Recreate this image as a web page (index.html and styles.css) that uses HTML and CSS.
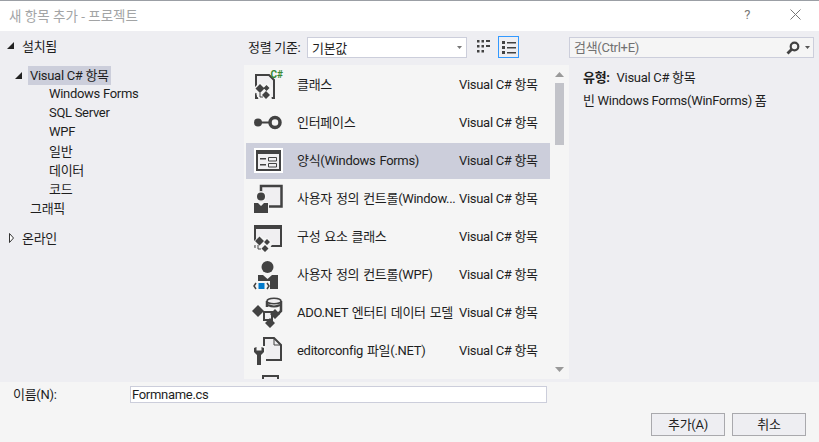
FILE: index.html
```html
<!DOCTYPE html>
<html lang="ko">
<head>
    <meta charset="utf-8">
    <title>새 항목 추가 - 프로젝트</title>
    <link rel="stylesheet" href="styles.css">
</head>
<body>
    <div class="title-bar">
        <span class="title-text">새 항목 추가 - 프로젝트</span>
        <span class="help-button">?</span>
        <svg class="close-button" width="11" height="11" viewBox="0 0 11 11"><path d="M0.5 0.5L10.5 10.5M10.5 0.5L0.5 10.5" stroke="#777" fill="none"/></svg>
    </div>

    <div class="main">
        <div class="tree">
            <div class="tree-row root">
                <svg class="twist" width="7" height="7" viewBox="0 0 7 7"><path d="M7 0V7H0Z" fill="#222"/></svg>
                <span>설치됨</span>
            </div>
            <div class="tree-row group">
                <svg class="twist" width="7" height="7" viewBox="0 0 7 7"><path d="M7 0V7H0Z" fill="#222"/></svg>
                <span class="tree-selected">Visual C# 항목</span>
            </div>
            <div class="tree-row leaf">Windows Forms</div>
            <div class="tree-row leaf">SQL Server</div>
            <div class="tree-row leaf">WPF</div>
            <div class="tree-row leaf">일반</div>
            <div class="tree-row leaf">데이터</div>
            <div class="tree-row leaf">코드</div>
            <div class="tree-row sibling">그래픽</div>
            <div class="tree-row root closed">
                <svg class="twist" width="5" height="10" viewBox="0 0 5 10"><path d="M0.5 0.5L4.5 5L0.5 9.5Z" fill="#fff" stroke="#333"/></svg>
                <span>온라인</span>
            </div>
        </div>

        <div class="center">
            <div class="toolbar">
                <span class="sort-label">정렬 기준:</span>
                <div class="sort-select">
                    <span>기본값</span>
                    <svg width="5" height="3" viewBox="0 0 5 3"><path d="M0 0H5L2.5 3Z" fill="#777"/></svg>
                </div>
                <svg class="grid-view" width="14" height="14" viewBox="0 0 14 14" fill="#424242">
                    <path d="M1 0h2.500v2.500H1zM5.500 0h2.500v2.500H5.500zM10 0h4v2h-4zM1 5h2.500v2.500H1zM5.500 5h2.500v2.500H5.500zM10 5h4v2h-4zM1 10h2.500v2.500H1zM5.500 10h2.500v2.500H5.500z"/>
                </svg>
                <div class="list-view">
                    <svg width="14" height="13" viewBox="0 0 14 13" fill="#424242">
                        <path d="M0 0h3v3H0zM5 1h9v1.500H5zM0 5h3v3H0zM5 6h9v1.500H5zM0 10h3v3H0zM5 11h9v1.500H5z"/>
                    </svg>
                </div>
            </div>

            <div class="list-wrap">
                <div class="item-list">
                    <div class="item">
                        <svg class="item-icon" width="32" height="32" viewBox="0 0 32 32">
                            <path d="M3 6H16L21 11V29H3Z" fill="#f0eff1" stroke="#424242" stroke-width="2"/>
                            <path d="M0 20L7 13L11 16L15 14L20 19L18 25L19 31H6L4 27Z" fill="#f5f5f5"/>
                            <path d="M7 15L11.500 19.500L7 24L2.500 19.500ZM13.500 16L16.500 19L13.500 22L10.500 19ZM13 22L17 26L13 30L9 26Z" fill="#424242"/>
                            <path d="M7 24V28H10M3 24V29H5" fill="none" stroke="#424242"/>
                            <text class="csharp" x="17.500" y="9">C#</text>
                        </svg>
                        <span class="item-name">클래스</span>
                        <span class="item-type">Visual C# 항목</span>
                    </div>
                    <div class="item">
                        <svg class="item-icon" width="32" height="32" viewBox="0 0 32 32">
                            <circle cx="5" cy="15.500" r="4" fill="#424242"/>
                            <path d="M8 15.500H16" stroke="#424242" stroke-width="2"/>
                            <circle cx="22" cy="15.500" r="5" fill="#f5f5f5" stroke="#424242" stroke-width="3.500"/>
                        </svg>
                        <span class="item-name">인터페이스</span>
                        <span class="item-type">Visual C# 항목</span>
                    </div>
                    <div class="item selected">
                        <svg class="item-icon" width="32" height="32" viewBox="0 0 32 32">
                            <rect x="1" y="3" width="29" height="25" fill="#fff"/>
                            <rect x="3" y="5" width="25" height="21" fill="#424242"/>
                            <rect x="5" y="9" width="21" height="15" fill="#f0eff1"/>
                            <path d="M7 13h6v1.500H7zM7 19h6v1.500H7z" fill="#424242"/>
                            <path d="M15.500 12.500h8v3.500h-8zM15.500 18.500h8v3.500h-8z" fill="none" stroke="#424242"/>
                        </svg>
                        <span class="item-name">양식(Windows Forms)</span>
                        <span class="item-type">Visual C# 항목</span>
                    </div>
                    <div class="item">
                        <svg class="item-icon" width="32" height="32" viewBox="0 0 32 32">
                            <rect x="8" y="3" width="20.500" height="20.500" fill="#f0eff1" stroke="#424242" stroke-width="2.500"/>
                            <circle cx="8" cy="13.500" r="5.500" fill="#f5f5f5"/>
                            <rect x="0" y="19" width="16" height="12" fill="#f5f5f5"/>
                            <circle cx="8" cy="13.500" r="4" fill="#424242"/>
                            <path d="M1 20H5L8 23L11 20H15V30H1Z" fill="#424242"/>
                        </svg>
                        <span class="item-name">사용자 정의 컨트롤(Window...</span>
                        <span class="item-type">Visual C# 항목</span>
                    </div>
                    <div class="item">
                        <svg class="item-icon" width="32" height="32" viewBox="0 0 32 32">
                            <rect x="2" y="5" width="26" height="20" fill="#f0eff1" stroke="#424242" stroke-width="2"/>
                            <rect x="1" y="4" width="28" height="4" fill="#424242"/>
                            <path d="M0 21L7 14L11 17L15 17L20 22L17 27L16 32H3Z" fill="#f5f5f5"/>
                            <path d="M6.500 15.500L11 20L6.500 24.500L2 20ZM14 18L17 21L14 24L11 21ZM12 24L15.500 27.500L12 31L8.500 27.500Z" fill="#424242"/>
                            <path d="M5 24V28H8M2 24V27" fill="none" stroke="#424242"/>
                        </svg>
                        <span class="item-name">구성 요소 클래스</span>
                        <span class="item-type">Visual C# 항목</span>
                    </div>
                    <div class="item">
                        <svg class="item-icon" width="32" height="32" viewBox="0 0 32 32">
                            <circle cx="14.500" cy="8" r="6" fill="#424242"/>
                            <path d="M5 16H10L14.500 20L19 16H25V30H5Z" fill="#424242"/>
                            <rect x="0" y="22" width="17" height="9" fill="#f5f5f5"/>
                            <rect x="5.500" y="24" width="6" height="6" fill="#007acc"/>
                            <path d="M3 24L1 27L3 30M14 24L16 27L14 30" fill="none" stroke="#424242" stroke-width="1.500"/>
                        </svg>
                        <span class="item-name">사용자 정의 컨트롤(WPF)</span>
                        <span class="item-type">Visual C# 항목</span>
                    </div>
                    <div class="item">
                        <svg class="item-icon" width="32" height="32" viewBox="0 0 32 32">
                            <path d="M14 4V10M28 4V14L25 17" fill="none" stroke="#424242" stroke-width="2.500"/>
                            <ellipse cx="21" cy="4" rx="7" ry="2.800" fill="#f0eff1" stroke="#424242" stroke-width="1.500"/>
                            <path d="M15 8Q21 11 27 8" fill="none" stroke="#424242" stroke-width="2"/>
                            <rect x="11" y="15" width="8" height="8" fill="#f0eff1" stroke="#424242" stroke-width="2"/>
                            <path d="M5 8L11 14L5 20L-1 14Z" fill="#424242"/>
                            <path d="M22 12L27 17L22 22L17 17ZM17 21L22 26L17 31L12 26Z" fill="#424242"/>
                        </svg>
                        <span class="item-name">ADO.NET 엔터티 데이터 모델</span>
                        <span class="item-type">Visual C# 항목</span>
                    </div>
                    <div class="item">
                        <svg class="item-icon" width="32" height="32" viewBox="0 0 32 32">
                            <path d="M11 3H21L28 10V25H11Z" fill="#f0eff1" stroke="#424242" stroke-width="2"/>
                            <path d="M21 3V10H28" fill="none" stroke="#424242"/>
                            <rect x="0" y="11" width="13" height="20" fill="#f5f5f5"/>
                            <path d="M1 13V17L4 20V30H8V20L11 17V13L8.500 12V15.500H3.500V12Z" fill="#424242"/>
                        </svg>
                        <span class="item-name">editorconfig 파일(.NET)</span>
                        <span class="item-type">Visual C# 항목</span>
                    </div>
                    <div class="item">
                        <svg class="item-icon" width="32" height="32" viewBox="0 0 32 32">
                            <path d="M10 3H25V20H10Z" fill="#f0eff1" stroke="#424242" stroke-width="2"/>
                        </svg>
                    </div>
                </div>
                <div class="scrollbar">
                    <svg class="arrow-up" width="9" height="5" viewBox="0 0 9 5"><path d="M4.500 0L9 5H0Z" fill="#999"/></svg>
                    <div class="thumb"></div>
                    <svg class="arrow-down" width="9" height="5" viewBox="0 0 9 5"><path d="M0 0H9L4.500 5Z" fill="#999"/></svg>
                </div>
            </div>
        </div>

        <div class="details">
            <div class="search-box">
                <span class="search-hint">검색(Ctrl+E)</span>
                <svg width="14" height="14" viewBox="0 0 14 14"><circle cx="8.500" cy="5.500" r="3.800" fill="none" stroke="#424242" stroke-width="2.200"/><path d="M5.500 8.500L1.500 12.500" stroke="#424242" stroke-width="2.800"/></svg>
                <svg class="search-arrow" width="5" height="3" viewBox="0 0 5 3"><path d="M0 0H5L2.500 3Z" fill="#555"/></svg>
            </div>
            <div class="details-type"><b>유형:</b> Visual C# 항목</div>
            <div class="details-desc">빈 Windows Forms(WinForms) 폼</div>
        </div>
    </div>

    <div class="footer">
        <div class="name-row">
            <label class="name-label" for="name-input">이름(N):</label>
            <input class="name-input" id="name-input" type="text" value="Formname.cs">
        </div>
        <div class="button-row">
            <button type="button">추가(A)</button>
            <button type="button">취소</button>
        </div>
    </div>
</body>
</html>
```

FILE: styles.css
```css
body {
    font-family: Roboto, 'Noto Sans CJK KR', sans-serif;
    font-size: 13px;
    letter-spacing: -0.3px;
    color: #1e1e1e;
    width: 819px;
    height: 442px;
    margin: 0;
    overflow: hidden;
    display: flex;
    flex-direction: column;
    background-color: #eeeef2;
}

.title-bar {
    height: 27px;
    flex: none;
    display: flex;
    align-items: center;
    padding: 0 0 3px 9px;
    background-color: #fff;
    border-top: 1px solid #9b9fa5;
}

.title-text {
    font-size: 13.5px;
    letter-spacing: 0;
    color: #a2a4a5;
    flex: 1;
}

.help-button {
    color: #777;
    margin-right: 40px;
}

.close-button {
    margin-right: 18px;
}

.main {
    height: 351px;
    flex: none;
    display: flex;
}

/* left tree */
.tree {
    width: 244px;
    flex: none;
    padding-top: 5px;
    box-sizing: border-box;
}

.tree-row {
    height: 19px;
    display: flex;
    align-items: center;
    white-space: nowrap;
}

.leaf, .sibling {
    padding-bottom: 2px;
    box-sizing: border-box;
}

.root {
    padding-left: 7px;
}

.root .twist {
    margin-right: 8px;
}

.root.closed {
    margin-top: 10px;
    padding-left: 9px;
}

.group {
    margin-top: 11px;
    padding-left: 15px;
}

.group .twist {
    margin-right: 6px;
}

.tree-selected {
    background-color: #ccceDB;
    padding: 0 2px;
    line-height: 19px;
}

.leaf {
    padding-left: 49px;
}

.sibling {
    padding-left: 30px;
}

/* center column */
.center {
    width: 325px;
    flex: none;
    display: flex;
    flex-direction: column;
}

.toolbar {
    height: 34px;
    flex: none;
    display: flex;
    align-items: center;
    padding: 0 0 2px 4px;
    box-sizing: border-box;
}

.sort-label {
    width: 59px;
    flex: none;
    white-space: nowrap;
    margin-bottom: 2px;
}

.sort-select {
    width: 160px;
    height: 21px;
    box-sizing: border-box;
    flex: none;
    display: flex;
    align-items: center;
    justify-content: space-between;
    padding: 0 4px 0 4px;
    background-color: #fff;
    border: 1px solid #ccceDB;
}

.grid-view {
    margin-left: 9px;
}

.list-view {
    width: 21px;
    height: 22px;
    box-sizing: border-box;
    margin-left: 8px;
    display: flex;
    align-items: center;
    justify-content: center;
    border: 1px solid #3399ff;
}

.list-wrap {
    height: 314px;
    display: flex;
    background-color: #f5f5f5;
    overflow: hidden;
}

.item-list {
    width: 306px;
    flex: none;
    padding: 2px 0 0 2px;
    box-sizing: border-box;
}

.item {
    width: 304px;
    height: 36px;
    margin-bottom: 2px;
    display: flex;
    align-items: center;
    padding-left: 7px;
    box-sizing: border-box;
}

.item.selected {
    background-color: #ccceDB;
}

.item-icon {
    flex: none;
    overflow: visible;
}

.csharp {
    font-family: Roboto, sans-serif;
    font-size: 10px;
    font-weight: 700;
    letter-spacing: 0;
    fill: #388a34;
}

.item-name {
    width: 162px;
    margin: 0 0 4px 12px;
    flex: none;
    white-space: nowrap;
    word-spacing: 1px;
}

.item-type {
    margin-bottom: 4px;
    white-space: nowrap;
}

.scrollbar {
    width: 19px;
    flex: none;
    display: flex;
    flex-direction: column;
    align-items: center;
    padding-top: 7px;
    box-sizing: border-box;
}

.thumb {
    width: 9px;
    height: 62px;
    margin-top: 6px;
    background-color: #c2c3c9;
}

.arrow-down {
    margin-top: 222px;
}

/* right column */
.details {
    flex: 1;
    padding-right: 5px;
}

.search-box {
    height: 21px;
    margin-top: 6px;
    display: flex;
    align-items: center;
    padding: 0 3px 0 4px;
    box-sizing: border-box;
    background-color: #f5f5f5;
    border: 1px solid #ccceDB;
}

.search-hint {
    flex: 1;
    color: #717171;
    margin-bottom: 2px;
}

.search-arrow {
    margin-left: 5px;
}

.details-type {
    margin: 10px 0 0 14px;
    line-height: 19px;
}

.details-type b {
    margin-right: 4px;
}

.details-desc {
    margin: 4px 0 0 14px;
    line-height: 19px;
}

/* bottom band */
.footer {
    flex: 1;
    background-color: #f5f5f5;
    padding-top: 4px;
}

.name-row {
    display: flex;
    align-items: center;
    height: 17px;
}

.name-label {
    width: 130px;
    padding: 0 0 2px 13px;
    box-sizing: border-box;
    flex: none;
}

.name-input {
    width: 417px;
    height: 17px;
    box-sizing: border-box;
    padding: 0 1px;
    font-family: inherit;
    font-size: 13px;
    letter-spacing: inherit;
    color: #1e1e1e;
    background-color: #fff;
    border: 1px solid #ccceDB;
    outline: none;
}

.button-row {
    display: flex;
    justify-content: flex-end;
    gap: 7px;
    margin-top: 10px;
    padding-right: 13px;
}

button {
    width: 74px;
    height: 23px;
    padding: 0 0 2px;
    font-family: inherit;
    font-size: 13px;
    letter-spacing: inherit;
    color: #1e1e1e;
    background-color: #eeeef2;
    border: 1px solid #a9a9ad;
}
```
